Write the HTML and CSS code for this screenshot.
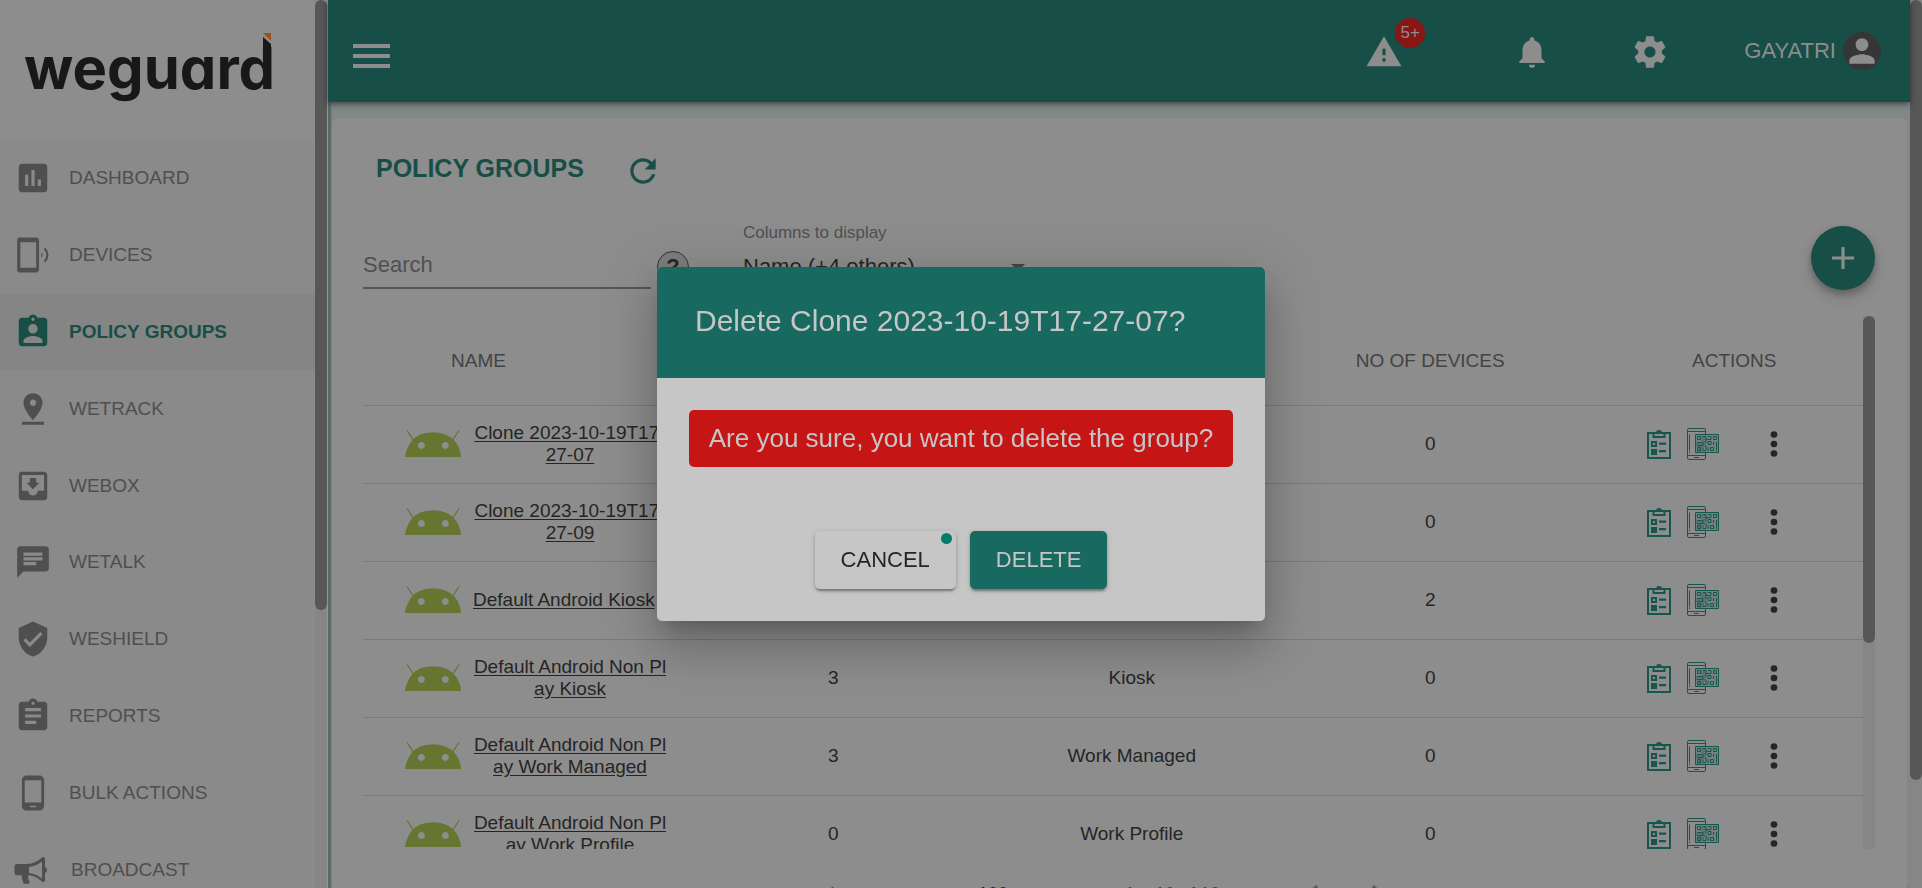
FILE: index.html
```html
<!DOCTYPE html>
<html lang="en">
<head>
<meta charset="utf-8">
<title>Policy Groups</title>
<link rel="stylesheet" href="styles.css">
</head>
<body>
<svg class="sprite" aria-hidden="true">
  <symbol id="i-dashboard" viewBox="0 0 24 24"><path d="M19 3H5c-1.100 0-2 .9-2 2v14c0 1.100.9 2 2 2h14c1.100 0 2-.9 2-2V5c0-1.100-.9-2-2-2zM9 17H7v-7h2v7zm4 0h-2V7h2v10zm4 0h-2v-4h2v4z"/></symbol>
  <symbol id="i-devices" viewBox="0 0 24 24"><path d="M3.500 1h10.500c1 0 1.800.8 1.800 1.800v18.400c0 1-.8 1.800-1.800 1.800H3.500c-1 0-1.500-.8-1.500-1.800V2.800C2 1.800 2.500 1 3.500 1zM4 4v16h10V4z"/><path d="M17.300 10.200v3.600q1.500-1.800 0-3.600z"/><path d="M19.300 7.800q3.700 4.200 0 8.400" fill="none" stroke="currentColor" stroke-width="1.300"/></symbol>
  <symbol id="i-policy" viewBox="0 0 24 24"><path d="M19 3h-4.180C14.400 1.840 13.300 1 12 1c-1.300 0-2.400.84-2.820 2H5c-1.100 0-2 .9-2 2v14c0 1.100.9 2 2 2h14c1.100 0 2-.9 2-2V5c0-1.100-.9-2-2-2zm-7 0c.55 0 1 .45 1 1s-.45 1-1 1-1-.45-1-1 .45-1 1-1zm0 4c1.660 0 3 1.340 3 3s-1.340 3-3 3-3-1.340-3-3 1.340-3 3-3zm6 12H6v-1.400c0-2 4-3.100 6-3.100s6 1.100 6 3.100V19z"/></symbol>
  <symbol id="i-track" viewBox="0 0 24 24"><path d="M18 8c0-3.310-2.690-6-6-6S6 4.690 6 8c0 4.500 6 11 6 11s6-6.500 6-11zm-8 0c0-1.100.9-2 2-2s2 .9 2 2-.89 2-2 2c-1.100 0-2-.9-2-2zM5 20v2h14v-2H5z"/></symbol>
  <symbol id="i-box" viewBox="0 0 24 24"><path d="M19 3H4.990c-1.110 0-1.980.9-1.980 2L3 19c0 1.100.88 2 1.990 2H19c1.100 0 2-.9 2-2V5c0-1.100-.9-2-2-2zm0 12h-4c0 1.660-1.350 3-3 3s-3-1.340-3-3H4.990V5H19v10zm-3-5h-2V7h-4v3H8l4 4 4-4z"/></symbol>
  <symbol id="i-talk" viewBox="0 0 24 24"><path d="M20 2H4c-1.100 0-1.990.9-1.990 2L2 22l4-4h14c1.100 0 2-.9 2-2V4c0-1.100-.9-2-2-2zM6 9h12v2H6V9zm8 5H6v-2h8v2zm4-6H6V6h12v2z"/></symbol>
  <symbol id="i-shield" viewBox="0 0 24 24"><path d="M12 1L3 5v6c0 5.550 3.840 10.740 9 12 5.160-1.260 9-6.450 9-12V5l-9-4zm-2 16l-4-4 1.410-1.410L10 14.170l6.590-6.590L18 9l-8 8z"/></symbol>
  <symbol id="i-reports" viewBox="0 0 24 24"><path d="M19 3h-4.180C14.400 1.840 13.300 1 12 1c-1.300 0-2.400.84-2.820 2H5c-1.100 0-2 .9-2 2v14c0 1.100.9 2 2 2h14c1.100 0 2-.9 2-2V5c0-1.100-.9-2-2-2zm-7 0c.55 0 1 .45 1 1s-.45 1-1 1-1-.45-1-1 .45-1 1-1zm2 14H7v-2h7v2zm3-4H7v-2h10v2zm0-4H7V7h10v2z"/></symbol>
  <symbol id="i-bulk" viewBox="0 0 24 24"><path d="M16 1H8C6.340 1 5 2.340 5 4v16c0 1.660 1.340 3 3 3h8c1.660 0 3-1.340 3-3V4c0-1.660-1.340-3-3-3zm-2 20h-4v-1h4v1zm3.250-3H6.750V4h10.500v14z"/></symbol>
  <symbol id="i-broadcast" viewBox="0 0 38 38"><path fill-rule="evenodd" d="M3 13h10c6 0 11-3 15-6.500 1.500-1.200 3-.4 3 1.500v8q2 1 2 3t-2 3v7c0 2-1.500 2.600-3 1.500-4-3.500-8-6-14-6.300.2 3.500.5 5 1.500 6.500.5 1-.5 2-1.500 2h-3c-1 0-1.800-.5-2-1.500-.7-3-1.300-5-1.300-7H3c-1.500 0-2.500-1-2.500-2.500v-6C.5 14 1.500 13 3 13zm12 3v6c5 .5 9 2.500 13 5.500V10.500c-4 3-8 5-13 5.500z"/></symbol>
  <symbol id="i-warning" viewBox="0 0 24 24"><path d="M1 21h22L12 2 1 21zm12-3h-2v-2h2v2zm0-4h-2v-4h2v4z"/></symbol>
  <symbol id="i-bell" viewBox="0 0 24 24"><path d="M12 22c1.100 0 2-.9 2-2h-4c0 1.100.89 2 2 2zm6-6v-5c0-3.070-1.640-5.640-4.500-6.320V4c0-.83-.67-1.500-1.500-1.500s-1.500.67-1.500 1.500v.68C7.630 5.360 6 7.920 6 11v5l-2 2v1h16v-1l-2-2z"/></symbol>
  <symbol id="i-gear" viewBox="0 0 24 24"><path d="M19.430 12.980c.04-.32.07-.64.07-.98s-.03-.66-.07-.98l2.110-1.650c.19-.15.24-.42.12-.64l-2-3.460c-.12-.22-.39-.3-.61-.22l-2.490 1c-.52-.4-1.080-.73-1.690-.98l-.38-2.650C14.460 2.180 14.250 2 14 2h-4c-.25 0-.46.18-.49.42l-.38 2.650c-.61.25-1.170.59-1.690.98l-2.490-1c-.23-.09-.49 0-.61.22l-2 3.460c-.13.22-.07.49.12.64l2.110 1.650c-.04.32-.07.65-.07.98s.03.66.07.98l-2.110 1.650c-.19.15-.24.42-.12.64l2 3.460c.12.22.39.3.61.22l2.490-1c.52.4 1.080.73 1.690.98l.38 2.650c.03.24.24.42.49.42h4c.25 0 .46-.18.49-.42l.38-2.650c.61-.25 1.170-.59 1.690-.98l2.490 1c.23.09.49 0 .61-.22l2-3.460c.12-.22.07-.49-.12-.64l-2.110-1.650zM12 15.500c-1.930 0-3.500-1.570-3.500-3.500s1.570-3.500 3.500-3.500 3.500 1.570 3.500 3.500-1.570 3.500-3.500 3.500z"/></symbol>
  <symbol id="i-person" viewBox="0 0 24 24"><path d="M12 12c2.210 0 4-1.790 4-4s-1.790-4-4-4-4 1.790-4 4 1.790 4 4 4zm0 2c-2.670 0-8 1.340-8 4v2h16v-2c0-2.660-5.330-4-8-4z"/></symbol>
  <symbol id="i-refresh" viewBox="0 0 24 24"><path d="M17.650 6.350C16.200 4.900 14.210 4 12 4c-4.420 0-7.990 3.580-7.990 8s3.570 8 7.990 8c3.730 0 6.840-2.550 7.730-6h-2.080c-.82 2.330-3.040 4-5.650 4-3.310 0-6-2.690-6-6s2.690-6 6-6c1.660 0 3.140.69 4.220 1.780L13 11h7V4l-2.350 2.350z"/></symbol>
  <symbol id="i-plus" viewBox="0 0 24 24"><path d="M19 13h-6v6h-2v-6H5v-2h6V5h2v6h6v2z"/></symbol>
  <symbol id="i-android" viewBox="0 0 56 27"><path fill-rule="evenodd" d="M0 27C1 18 6.500 11 7.500 10L1.500.8l1-.6L8.300 9C14 4 20 2.500 28 2.500S42 4 47.700 9L53.500.2l1 .6-6 9.200C52 13 55.500 19 56 27zM16.300 12a3.500 3.500 0 1 0 .1 0zM40.300 12a3.500 3.500 0 1 0 .1 0z"/></symbol>
  <symbol id="i-list" viewBox="0 0 24 30"><path d="M1 4h22v25H1z" fill="none" stroke="currentColor" stroke-width="2"/><path d="M6.500 4v4h11V4" fill="none" stroke="currentColor" stroke-width="2"/><path d="M9 4a3 3 0 0 1 6 0z"/><path d="M4 12h6v6H4zm2 2v2h2v-2z" fill-rule="evenodd"/><path d="M4 20h6v6H4zM12 13.500h7v2.200h-7zM12 21h7v2.200h-7z"/></symbol>
  <symbol id="i-qr" viewBox="0 0 32 32"><path d="M18.500 6V2q0-1.500-1.500-1.500H2Q.5.500.5 2v28q0 1.500 1.500 1.500h15q1.500 0 1.500-1.500v-5M.5 3.500h18M.5 27.500h18M2.500 6.500v16M2.500 23.500v1.500M7 29.500h5" fill="none" stroke="currentColor"/><path d="M8.500 6.500h23v18h-23z" fill-opacity=".2" stroke="currentColor"/><path d="M14 8h5v11h-4v5h-5v-6H9v-4h5z" fill-opacity=".3"/><path d="M10.500 8.500h3v3h-3zM10.500 19.500h3v3h-3zM26.500 8.500h3v3h-3zM16 8.500h3v3h5v-3h-3M10 14.500h6v3h-6M19 17.500v5h-3v-3M21 13.500h3v3h-3zM23.500 19.500h3v3h-3zM29.500 14v9M26.500 14v3M21 19v4M19 11v4" fill="none" stroke="currentColor"/></symbol>
  <symbol id="i-more" viewBox="0 0 8 28"><circle cx="4" cy="4.500" r="3.300"/><circle cx="4" cy="14" r="3.300"/><circle cx="4" cy="23.500" r="3.300"/></symbol>
</svg>

<div class="app">
  <aside class="sidebar">
    <div class="sidebar-body">
      <div class="logo"><span class="logo-word">weguard<svg class="logo-mark" viewBox="0 0 8 24"><path class="tick" d="M0 0h8v8z"/><path d="M0 4l8 7v13H0z"/></svg></span></div>
      <nav class="menu">
        <a class="item" href="#"><svg><use href="#i-dashboard"/></svg>DASHBOARD</a>
        <a class="item" href="#"><svg><use href="#i-devices"/></svg>DEVICES</a>
        <a class="item active" href="#"><svg><use href="#i-policy"/></svg>POLICY GROUPS</a>
        <a class="item" href="#"><svg><use href="#i-track"/></svg>WETRACK</a>
        <a class="item" href="#"><svg><use href="#i-box"/></svg>WEBOX</a>
        <a class="item" href="#"><svg><use href="#i-talk"/></svg>WETALK</a>
        <a class="item" href="#"><svg><use href="#i-shield"/></svg>WESHIELD</a>
        <a class="item" href="#"><svg><use href="#i-reports"/></svg>REPORTS</a>
        <a class="item" href="#"><svg><use href="#i-bulk"/></svg>BULK ACTIONS</a>
        <a class="item wide" href="#"><svg><use href="#i-broadcast"/></svg>BROADCAST</a>
      </nav>
    </div>
    <div class="track"><div class="thumb thumb-menu"></div></div>
  </aside>

  <div class="main">
    <header class="topbar">
      <button class="burger" aria-label="Toggle menu"><span></span><span></span><span></span></button>
      <button class="top-icon alerts" aria-label="Alerts"><svg><use href="#i-warning"/></svg><span class="badge">5+</span></button>
      <button class="top-icon bell" aria-label="Notifications"><svg><use href="#i-bell"/></svg></button>
      <button class="top-icon gear" aria-label="Settings"><svg><use href="#i-gear"/></svg></button>
      <button class="user">GAYATRI<span class="avatar"><svg><use href="#i-person"/></svg></span></button>
    </header>

    <main class="card">
      <div class="title-row">
        <h1>POLICY GROUPS</h1>
        <button class="refresh" aria-label="Refresh"><svg><use href="#i-refresh"/></svg></button>
      </div>
      <div class="filters">
        <input class="search" type="text" placeholder="Search" aria-label="Search">
        <button class="help" aria-label="Help">?</button>
        <div class="columns">
          <label for="cols">Columns to display</label>
          <div class="select-wrap">
            <select id="cols"><option>Name (+4 others)</option></select>
            <svg class="caret" viewBox="0 0 14 7"><path d="M0 0h14L7 7z"/></svg>
          </div>
        </div>
        <button class="fab" aria-label="Add policy group"><svg><use href="#i-plus"/></svg></button>
      </div>

      <div class="table-area">
        <div class="table-scroll">
          <table>
            <thead>
              <tr><th class="c-name">NAME</th><th class="c-mid"></th><th class="c-mid"></th><th class="c-mid">NO OF DEVICES</th><th class="c-act">ACTIONS</th></tr>
            </thead>
            <tbody>
              <tr><td class="c-name"><div class="name"><svg class="android"><use href="#i-android"/></svg><a href="#">Clone 2023-10-19T17-<br>27-07</a></div></td><td></td><td></td><td>0</td><td class="c-act"><div class="actions"><button aria-label="Details"><svg class="list"><use href="#i-list"/></svg></button><button aria-label="QR code"><svg class="qr"><use href="#i-qr"/></svg></button><button class="more" aria-label="More"><svg><use href="#i-more"/></svg></button></div></td></tr>
              <tr><td class="c-name"><div class="name"><svg class="android"><use href="#i-android"/></svg><a href="#">Clone 2023-10-19T17-<br>27-09</a></div></td><td></td><td></td><td>0</td><td class="c-act"><div class="actions"><button aria-label="Details"><svg class="list"><use href="#i-list"/></svg></button><button aria-label="QR code"><svg class="qr"><use href="#i-qr"/></svg></button><button class="more" aria-label="More"><svg><use href="#i-more"/></svg></button></div></td></tr>
              <tr><td class="c-name"><div class="name"><svg class="android"><use href="#i-android"/></svg><a class="single" href="#">Default Android Kiosk</a></div></td><td></td><td></td><td>2</td><td class="c-act"><div class="actions"><button aria-label="Details"><svg class="list"><use href="#i-list"/></svg></button><button aria-label="QR code"><svg class="qr"><use href="#i-qr"/></svg></button><button class="more" aria-label="More"><svg><use href="#i-more"/></svg></button></div></td></tr>
              <tr><td class="c-name"><div class="name"><svg class="android"><use href="#i-android"/></svg><a href="#">Default Android Non Pl<br>ay Kiosk</a></div></td><td>3</td><td>Kiosk</td><td>0</td><td class="c-act"><div class="actions"><button aria-label="Details"><svg class="list"><use href="#i-list"/></svg></button><button aria-label="QR code"><svg class="qr"><use href="#i-qr"/></svg></button><button class="more" aria-label="More"><svg><use href="#i-more"/></svg></button></div></td></tr>
              <tr><td class="c-name"><div class="name"><svg class="android"><use href="#i-android"/></svg><a href="#">Default Android Non Pl<br>ay Work Managed</a></div></td><td>3</td><td>Work Managed</td><td>0</td><td class="c-act"><div class="actions"><button aria-label="Details"><svg class="list"><use href="#i-list"/></svg></button><button aria-label="QR code"><svg class="qr"><use href="#i-qr"/></svg></button><button class="more" aria-label="More"><svg><use href="#i-more"/></svg></button></div></td></tr>
              <tr><td class="c-name"><div class="name"><svg class="android"><use href="#i-android"/></svg><a href="#">Default Android Non Pl<br>ay Work Profile</a></div></td><td>0</td><td>Work Profile</td><td>0</td><td class="c-act"><div class="actions"><button aria-label="Details"><svg class="list"><use href="#i-list"/></svg></button><button aria-label="QR code"><svg class="qr"><use href="#i-qr"/></svg></button><button class="more" aria-label="More"><svg><use href="#i-more"/></svg></button></div></td></tr>
            </tbody>
          </table>
        </div>
        <div class="track"><div class="thumb thumb-table"></div></div>
      </div>

      <div class="paginator">
        <span class="per-page">Items per page:</span>
        <span class="size">100</span>
        <span class="range">1 – 10 of 10</span>
        <button aria-label="Previous page"><svg viewBox="0 0 12 20"><path d="M10 2L2 10l8 8"/></svg></button>
        <button aria-label="Next page"><svg viewBox="0 0 12 20"><path d="M2 2l8 8-8 8"/></svg></button>
      </div>
    </main>
  </div>
  <div class="track"><div class="thumb thumb-page"></div></div>
</div>

<div class="overlay">
  <div class="dialog" role="dialog" aria-modal="true" aria-labelledby="dlg-title">
    <h2 id="dlg-title">Delete Clone 2023-10-19T17-27-07?</h2>
    <div class="dialog-body">
      <p class="warn">Are you sure, you want to delete the group?</p>
      <div class="dialog-actions">
        <button class="btn cancel">CANCEL<span class="dot"></span></button>
        <button class="btn delete">DELETE</button>
      </div>
    </div>
  </div>
</div>
</body>
</html>
```
FILE: styles.css
```css
* { box-sizing: border-box; }

body {
  margin: 0;
  overflow: hidden;
  font-family: "Liberation Sans", Arial, sans-serif;
  font-size: 19px;
  line-height: 22px;
  color: #252525;
  background: #8d8d8d;
}

button {
  padding: 0;
  border: 0;
  background: none;
  font: inherit;
  color: inherit;
}

svg { display: block; fill: currentColor; }
.sprite { position: absolute; width: 0; height: 0; }

.app { display: flex; height: 100vh; overflow: hidden; }

/* scrollbars */
.track { flex: none; width: 12px; background: #868686; }
.thumb { background: #575757; border-radius: 6px; }
.thumb-menu { height: 610px; }
.thumb-table { height: 327px; }
.thumb-page { height: 780px; }

/* sidebar */
.sidebar {
  flex: none;
  display: flex;
  width: 328px;
  border-right: 1px solid #969696;
  background: #8d8d8d;
}
.sidebar-body { flex: 1; overflow: hidden; }
.logo { height: 140px; padding: 34px 0 0 24px; }
.logo-word {
  position: relative;
  display: inline-block;
  font: 700 58px/68px Inter, sans-serif;
  font-feature-settings: "cv11";
  color: #181818;
}
.logo-mark { position: absolute; top: -1px; right: 4px; width: 8px; height: 24px; }
.tick { fill: #9b4f1c; }
.menu { display: flex; flex-direction: column; height: 768px; background: #8a8a8a; }
.item {
  flex: 1;
  display: flex;
  align-items: center;
  gap: 17px;
  padding-left: 14px;
  color: #4f4f4f;
  text-decoration: none;
}
.item svg { width: 38px; height: 38px; }
.item.active { background: #858585; color: #174f47; font-weight: bold; }
.item.wide { gap: 19px; }

/* top bar */
.main { flex: 1; min-width: 0; background: #818886; box-shadow: inset 3px 0 2px #586864; }
.topbar {
  position: relative;
  display: flex;
  align-items: center;
  height: 102px;
  padding: 0 29px 0 25px;
  background: #174e47;
  color: #8d8d8d;
  box-shadow: 0 2px 6px rgba(0, 0, 0, .5);
}
.burger { display: grid; gap: 6px; width: 37px; margin: 10px auto 0 0; }
.burger span { height: 4px; background: #8d8d8d; }
.top-icon { position: relative; padding-top: 2px; }
.top-icon svg { width: 38px; height: 38px; }
.alerts { margin-right: 110px; }
.bell { margin-right: 80px; }
.gear { margin-right: 75px; }
.badge {
  position: absolute;
  top: -13px;
  right: -22px;
  width: 30px;
  height: 30px;
  border-radius: 50%;
  background: #8b1515;
  font-size: 17px;
  line-height: 30px;
  text-align: center;
}
.user { display: flex; align-items: center; gap: 7px; font-size: 22px; }
.avatar { border-radius: 50%; background: #363636; overflow: hidden; }
.avatar svg { width: 38px; height: 38px; }

/* card */
.card {
  height: 900px;
  margin: 16px 3px 0 4px;
  padding: 32px 32px 0 31px;
  border-radius: 6px;
  background: #8d8d8d;
}
.title-row { display: flex; align-items: flex-end; gap: 40px; height: 40px; padding-left: 13px; color: #174f47; }
.title-row h1 { margin: 0 0 8px; font-size: 25px; line-height: 28px; }
.refresh svg { width: 38px; height: 38px; }

.filters { display: flex; align-items: flex-end; margin-top: 28px; height: 72px; }
.search {
  width: 288px;
  height: 48px;
  margin-bottom: 1px;
  padding: 2px 0 0;
  border: 0;
  border-bottom: 2px solid #565656;
  background: none;
  font: inherit;
  font-size: 22px;
}
.search::placeholder { color: #505050; opacity: 1; }
.help {
  width: 32px;
  height: 32px;
  margin: 0 54px 7px 6px;
  border: 1px solid #333;
  border-radius: 50%;
  background: #7d7d7d;
  font-size: 22px;
  font-weight: bold;
}
.columns { width: 288px; }
.columns label { display: block; font-size: 17px; color: #505050; }
.select-wrap { display: flex; align-items: center; height: 46px; }
.select-wrap select {
  flex: 1;
  appearance: none;
  padding: 0;
  border: 0;
  background: none;
  font: inherit;
  font-size: 22px;
  line-height: 26px;
  color: #252525;
}
.caret { width: 14px; height: 7px; margin-right: 6px; color: #454545; }
.fab {
  display: grid;
  place-items: center;
  width: 64px;
  height: 64px;
  margin-left: auto;
  border-radius: 50%;
  background: #174e47;
  color: #8d8d8d;
  box-shadow: 0 4px 6px rgba(0, 0, 0, .2), 0 7px 14px rgba(0, 0, 0, .16);
}
.fab svg { width: 38px; height: 38px; }

/* table */
.table-area { display: flex; height: 60vh; margin-top: 26px; overflow: hidden; }
.table-scroll { flex: 1; overflow: hidden; }
table { width: 100%; table-layout: fixed; border-collapse: separate; border-spacing: 0; }
th, td { padding: 0; text-align: center; border-bottom: 1px solid #7a7a7a; }
th { height: 90px; font-weight: normal; color: #434343; }
td { height: 78px; padding-bottom: 2px; }
.c-name { width: 21.4%; }
th.c-name { padding-left: 88px; text-align: left; }
td.c-name { padding-left: 42px; }
.c-mid { width: 19.9%; }
.c-act { padding-left: 26px; }
.name { display: flex; align-items: center; gap: 12px; }
.name a { width: 194px; white-space: nowrap; color: #252525; text-underline-offset: 2px; }
.name a.single { text-align: left; }
.android { flex: none; width: 56px; height: 27px; color: #66752f; }
.actions { display: flex; align-items: center; justify-content: center; gap: 16px; color: #17564d; }
.list { width: 24px; height: 30px; }
.qr { width: 32px; height: 32px; }
.more { width: 96px; margin-left: -9px; color: #252525; }
.more svg { width: 8px; height: 28px; margin: 0 auto; }

.paginator { display: flex; align-items: center; height: 90px; padding-left: 467px; font-size: 18px; color: #434343; }
.per-page { width: 148px; font-size: 17px; }
.size { width: 147px; color: #252525; }
.range { width: 182px; }
.paginator button { width: 12px; margin-right: 52px; }
.paginator svg { width: 12px; height: 20px; fill: none; stroke: #5a5a5a; stroke-width: 3; }

/* dialog */
.overlay { position: fixed; inset: 0; display: grid; place-items: center; }
.dialog {
  width: 608px;
  border-radius: 5px;
  overflow: hidden;
  background: #c6c6c6;
  box-shadow: 0 13px 18px -8px rgba(0, 0, 0, .2), 0 29px 46px 4px rgba(0, 0, 0, .14), 0 11px 55px 10px rgba(0, 0, 0, .12);
}
.dialog h2 { margin: 0; padding: 36px 38px 39px; background: #18695f; color: #c6c6c6; font-size: 30px; font-weight: normal; line-height: 36px; }
.dialog-body { padding: 32px; }
.warn {
  margin: 0 0 64px;
  padding: 14px 0;
  border-radius: 5px;
  background: #c61515;
  color: #c6c6c6;
  font-size: 26px;
  line-height: 29px;
  text-align: center;
}
.dialog-actions { display: flex; justify-content: center; gap: 14px; }
.btn {
  position: relative;
  height: 58px;
  padding: 0 26px;
  border-radius: 5px;
  font-size: 22px;
  box-shadow: 0 4px 2px -2px rgba(0, 0, 0, .2), 0 2px 3px rgba(0, 0, 0, .2), 0 1px 6px rgba(0, 0, 0, .12);
}
.cancel { background: #c6c6c6; color: #252525; }
.delete { background: #18695f; color: #c6c6c6; }
.dot { position: absolute; top: 2px; right: 4px; width: 11px; height: 11px; border-radius: 50%; background: #007d6e; }
```
